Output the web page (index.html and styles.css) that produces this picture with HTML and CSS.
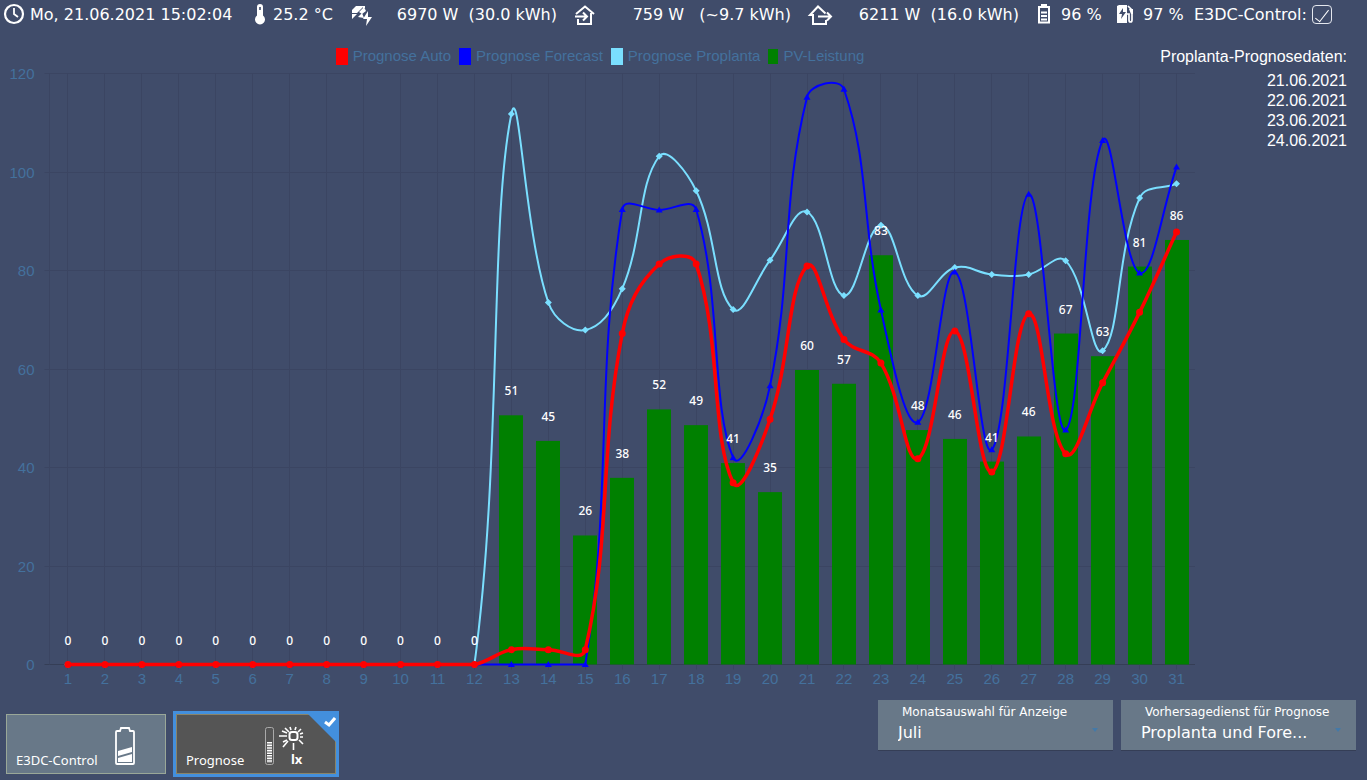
FILE: index.html
```html
<!DOCTYPE html>
<html lang="de">
<head>
<meta charset="utf-8">
<title>E3DC-Control Prognose</title>
<link rel="stylesheet" href="styles.css">
</head>
<body>
<header class="status">
  <div class="status-item">
    <svg class="icon" width="22" height="22" viewBox="0 0 22 22"><circle cx="11" cy="11" r="9" fill="none" stroke="#fff" stroke-width="2.2"/><path d="M11 5v6l4 3" fill="none" stroke="#fff" stroke-width="1.8"/></svg>
    <span class="after-clock">Mo, 21.06.2021 15:02:04</span>
  </div>
  <div class="status-item">
    <svg class="icon" width="18" height="22" viewBox="0 0 18 22"><path d="M6 4a3 3 0 0 1 6 0v8.500a5 5 0 1 1-6 0z" fill="#fff"/><path d="M9 4v3" stroke="#404c6a" stroke-width="1.600"/></svg>
    <span class="after-thermometer">25.2 °C</span>
  </div>
  <div class="status-item power">
    <svg class="icon" width="24" height="24" viewBox="0 0 24 24"><path d="M3 8L7 4h8l-7 7H3zM3 12h5l-5 5zM10 10l5-5 2 4-4 3z" fill="#fff"/><path d="M9 15l4-4 2 5zM14 4h2v2h-2z" fill="#fff"/><path d="M19 9l-5 8h4l-1 7 6-9h-4z" fill="#fff"/></svg>
    <span>6970 W&nbsp; (30.0 kWh)</span>
  </div>
  <div class="status-item power">
    <svg class="icon" width="24" height="24" viewBox="0 0 24 24"><path d="M3 12l9-7.500 9 7.500M5 17v5h13V11M2 14.500h11M10 10.500l4 4-4 4" fill="none" stroke="#fff" stroke-width="2"/></svg>
    <span>759 W&nbsp;&nbsp; (~9.7 kWh)</span>
  </div>
  <div class="status-item power">
    <svg class="icon" width="26" height="24" viewBox="0 0 26 24"><path d="M18.500 11.500L11 4.500 3 13h3v9h13v-4M11 14.500h13M20 10.500l4 4-4 4" fill="none" stroke="#fff" stroke-width="2"/></svg>
    <span>6211 W&nbsp; (16.0 kWh)</span>
  </div>
  <div class="status-item">
    <svg class="icon" width="18" height="22" viewBox="0 0 18 22"><path d="M4 4h10v15.500H4z" fill="none" stroke="#fff" stroke-width="2"/><path d="M6 2h6M6 9.500h6M6 13h6M6 16.500h6" stroke="#fff" stroke-width="2"/></svg>
    <span class="after-battery">96 %</span>
  </div>
  <div class="status-item">
    <svg class="icon" width="20" height="22" viewBox="0 0 20 22"><path d="M2 3l2-1h8v18H2z" fill="#fff"/><path d="M8 5l-4 6h3l-1 5 5-7H8z" fill="#404c6a"/><path d="M12 11h2v6q0 2 1.500 2T17 17V7l-4-4" fill="none" stroke="#fff" stroke-width="1.700"/><path d="M14 6h4v5h-2z" fill="#fff"/></svg>
    <span class="after-charger">97 %</span>
  </div>
  <div class="status-item">
    <label for="control">E3DC-Control:</label><input class="control-check" type="checkbox" id="control" checked>
  </div>
</header>

<main class="content">
  <section class="chart">
    <ul class="legend">
      <li><i class="swatch auto"></i>Prognose Auto</li>
      <li><i class="swatch forecast"></i>Prognose Forecast</li>
      <li><i class="swatch proplanta"></i>Prognose Proplanta</li>
      <li><i class="swatch pv"></i>PV-Leistung</li>
    </ul>
    <div class="plot"><svg id="plot" role="img" aria-label="Prognose und PV-Leistung"></svg></div>
  </section>
  <aside class="dates">
    <h2>Proplanta-Prognosedaten:</h2>
    <p>21.06.2021</p>
    <p>22.06.2021</p>
    <p>23.06.2021</p>
    <p>24.06.2021</p>
  </aside>
</main>

<footer class="controls">
  <nav class="tiles">
    <button class="tile" type="button">
      <span>E3DC-Control</span>
      <svg class="tile-battery" width="22" height="40" viewBox="0 0 22 40"><path d="M2 6q0-1 1-1h3l1-3h8l1 3h3q1 0 1 1v31q0 1-1 1H3q-1 0-1-1z" fill="none" stroke="#fff" stroke-width="1.800"/><path d="M4 25l14-4v5L4 30zM4 32l14-4v8H4z" fill="#fff"/></svg>
    </button>
    <button class="tile selected" type="button">
      <span>Prognose</span>
      <svg class="tile-lux" width="42" height="40" viewBox="0 0 42 40">
        <rect x="1.500" y="1.500" width="8" height="37" rx="2" fill="none" stroke="#aaa"/>
        <path d="M5.500 16v21" stroke="#fff" stroke-width="5" stroke-dasharray="1.600 1"/>
        <rect x="25.500" y="6" width="8" height="8" rx="2.500" fill="none" stroke="#fff" stroke-width="2"/>
        <path d="M15 10h8M29.500 17v7M24 15l-5 6M19 16l4-2M18 5l5 2M21 2l4 4M26 1l1 3M32 1l-1 3M37 3l-3 3M39 7l-3 1M36 11h3M35 14l4 4" stroke="#fff" stroke-width="1.600"/>
        <text x="27" y="38" class="lux-unit">lx</text>
      </svg>
      <svg class="corner" width="28" height="28" viewBox="0 0 28 28"><path d="M0 0h28v28z" fill="#438fdd"/><path d="M17 8l4 3 6-7" fill="none" stroke="#fff" stroke-width="3"/></svg>
    </button>
  </nav>
  <div class="selects">
    <div class="field">
      <label for="month">Monatsauswahl für Anzeige</label>
      <select id="month"><option>Juli</option></select>
    </div>
    <div class="field">
      <label for="service">Vorhersagedienst für Prognose</label>
      <select id="service"><option>Proplanta und Fore...</option></select>
    </div>
  </div>
</footer>
<script src="chart.js"></script>
</body>
</html>
```
FILE: styles.css
```css
* {
  box-sizing: border-box;
}

body {
  margin: 0;
  min-height: 100vh;
  display: flex;
  flex-direction: column;
  background: #404c6a;
  color: #fff;
  font-family: "DejaVu Sans", Verdana, sans-serif;
}

.status {
  display: grid;
  grid-template-columns: 248fr 98fr 224fr 234fr 228fr 80fr 79fr 173fr;
  height: 28px;
  padding-left: 3px;
  font-size: 16px;
  line-height: 26px;
  white-space: pre;
}

.status-item {
  display: flex;
  align-items: center;
}

.status-item span,
.status-item label {
  padding-top: 2px;
}

.icon {
  flex: none;
}

.after-clock {
  margin-left: 5px;
}

.after-thermometer {
  margin-left: 4px;
}

.after-battery,
.after-charger {
  margin-left: 8px;
}

.power {
  justify-content: space-between;
  padding-right: 16px;
}

.control-check {
  appearance: none;
  width: 20px;
  height: 19px;
  margin: 0 0 0 5px;
  border: 1px solid #e4e7ee;
  border-radius: 4px;
  display: grid;
  place-items: center;
}

.control-check:checked::before {
  content: "";
  width: 5px;
  height: 14px;
  border: solid #fff;
  border-width: 0 1px 1px 0;
  transform: rotate(38deg);
}

.content {
  flex: 1;
  display: flex;
}

.chart {
  flex: 1;
  min-width: 0;
  display: flex;
  flex-direction: column;
}

.legend {
  display: flex;
  justify-content: center;
  gap: 8px;
  margin: 0;
  padding: 18px 0 0;
  list-style: none;
  color: #44719d;
  font: 15px/20px "Liberation Sans", Arial, sans-serif;
}

.legend li {
  display: flex;
  align-items: center;
  gap: 5px;
}

.swatch {
  width: 12px;
  height: 17px;
}

.auto {
  background: #f00;
}

.forecast {
  background: #00f;
}

.proplanta {
  background: #7adfff;
}

.pv {
  width: 10px;
  height: 15px;
  background: #008000;
}

.plot {
  flex: 1;
  position: relative;
  min-height: 200px;
}

.plot svg {
  position: absolute;
  inset: 0;
  width: 100%;
  height: 100%;
}

.grid {
  stroke: #3b4562;
}

.axis {
  stroke: #353e56;
}

.tick {
  fill: #44719d;
  font: 15px "Liberation Sans", Arial, sans-serif;
}

.value {
  fill: #fff;
  font: 500 12px "Noto Sans", sans-serif;
  text-anchor: middle;
}

.centered {
  text-anchor: middle;
}

.right {
  text-anchor: end;
}

.dates {
  width: 167px;
  padding: 19px 20px 0 0;
  display: flex;
  flex-direction: column;
  align-items: flex-end;
  font: 16px/20px "Liberation Sans", Arial, sans-serif;
  white-space: nowrap;
}

.dates h2 {
  margin: 0 0 4px;
  font: inherit;
}

.dates p {
  margin: 0;
}

.controls {
  display: flex;
  justify-content: space-between;
  align-items: flex-start;
  height: 88px;
  padding: 8px 11px 0 6px;
}

.tiles {
  display: flex;
  gap: 10px;
  padding-top: 14px;
}

.tile {
  position: relative;
  display: flex;
  align-items: flex-end;
  width: 160px;
  height: 60px;
  padding: 0 9px 7px;
  border: 1px solid #9aa798;
  background: #687888;
  color: #fff;
  font: 13px/11px "Noto Sans", sans-serif;
}

.selected {
  border-color: #8a8468;
  background: #555;
  outline: 3px solid #438fdd;
}

.tile-battery {
  margin-left: 16px;
}

.tile-lux {
  margin-left: 20px;
  overflow: visible;
}

.lux-unit {
  fill: #fff;
  font: bold 13px "Noto Sans", sans-serif;
}

.corner {
  position: absolute;
  top: -1px;
  right: -1px;
}

.selects {
  display: flex;
  gap: 8px;
}

.field {
  position: relative;
  width: 235px;
  height: 51px;
  padding-top: 4px;
  border-bottom: 1px solid #353e56;
  background: #687888;
}

.field::after {
  content: "";
  position: absolute;
  top: 28px;
  right: 15px;
  border: solid transparent;
  border-width: 4px 3px 0;
  border-top-color: #4479a8;
}

.field label {
  display: block;
  padding-left: 24px;
  font-size: 12px;
  line-height: 17px;
  white-space: nowrap;
}

.field select {
  appearance: none;
  width: 100%;
  height: 24px;
  padding: 0 20px;
  border: 0;
  background: none;
  color: #fff;
  font: 16px/24px "DejaVu Sans", Verdana, sans-serif;
}
```
FILE: chart.js
```js
const none = Array(12).fill(0);
const auto = none.concat([3, 3, 3, 67.2, 81.3, 81.3, 36.9, 49.8, 80.9, 66, 61.2, 41.8, 67.7, 39.1, 71.2, 42.8, 57.2, 71.5, 87.8]);
const forecast = none.concat([0, 0, 0, 92.4, 92.3, 92.4, 42, 56.6, 115.2, 116.8, 72, 49.2, 79.7, 43.6, 95.5, 47.6, 106.4, 79.5, 101]);
const proplanta = none.concat([111.8, 73.5, 67.9, 76.3, 103.2, 96.2, 72.1, 82.1, 91.9, 74.9, 89.2, 74.9, 80.6, 79.2, 79.2, 82, 63.7, 94.7, 97.6]);
const pv = none.concat([50.6, 45.4, 26.2, 37.9, 51.8, 48.6, 40.9, 35, 59.8, 57, 83.1, 47.6, 45.8, 41.2, 46.3, 67.2, 62.6, 80.8, 86.2]);

const svg = document.getElementById('plot');

function add(name, attrs, text) {
  const el = document.createElementNS('http://www.w3.org/2000/svg', name);
  for (const key in attrs) el.setAttribute(key, attrs[key]);
  if (text !== undefined) el.textContent = text;
  svg.appendChild(el);
}

function draw() {
  const box = svg.parentElement.getBoundingClientRect();
  const left = 49.5, right = box.width - 5, top = 7.5, bottom = box.height - 27.5;
  const step = (right - left) / 31;
  const px = i => left + step * (i + 0.5);
  const py = v => bottom - (bottom - top) * v / 120;
  const crisp = n => Math.floor(n) + 0.5;
  const clamp = y => Math.max(top, Math.min(bottom, y));

  svg.replaceChildren();
  for (let v = 0; v <= 120; v += 20) {
    const y = crisp(py(v));
    add('line', {class: v ? 'grid' : 'axis', x1: left - 5, x2: right, y1: y, y2: y});
    add('text', {class: 'tick right', x: left - 15, y: y + 5}, v);
  }
  add('line', {class: 'grid', x1: left, x2: left, y1: top, y2: bottom});
  pv.forEach((v, i) => {
    const x = crisp(px(i));
    add('line', {class: 'grid', x1: x, x2: x, y1: top, y2: bottom + 5});
    add('text', {class: 'tick centered', x: px(i), y: bottom + 19}, i + 1);
    if (v) add('rect', {x: Math.round(px(i) - step * 0.325), y: py(v), width: Math.round(step * 0.65), height: bottom - py(v), fill: '#008000'});
  });

  curve(proplanta, '#7adfff', 2, (x, y) => `M${x} ${y - 3.5}l3.5 3.5l-3.5 3.5l-3.5-3.5z`);
  curve(forecast, '#00f', 2, (x, y) => `M${x} ${y - 3.5}l3.5 6h-7z`);
  curve(auto, '#f00', 3.5, (x, y) => `M${x - 3.5} ${y}a3.5 3.5 0 1 0 7 0a3.5 3.5 0 1 0-7 0`);

  pv.forEach((v, i) => add('text', {class: 'value', x: px(i), y: py(v) - 20}, Math.round(v)));

  // Smooth line with 0.4 tension; control points stay inside the plot area.
  function curve(data, color, width, marker) {
    const pts = data.map((v, i) => [px(i), py(v)]);
    const ctl = pts.map((p, i) => {
      const a = pts[Math.max(i - 1, 0)], b = pts[Math.min(i + 1, pts.length - 1)];
      const da = Math.hypot(p[0] - a[0], p[1] - a[1]), db = Math.hypot(b[0] - p[0], b[1] - p[1]);
      const fa = 0.4 * da / (da + db), fb = 0.4 * db / (da + db);
      const dx = b[0] - a[0], dy = b[1] - a[1];
      return [p[0] - fa * dx, clamp(p[1] - fa * dy), p[0] + fb * dx, clamp(p[1] + fb * dy)];
    });
    let d = `M${pts[0]}`;
    for (let i = 1; i < pts.length; i++) {
      d += `C${ctl[i - 1][2]} ${ctl[i - 1][3]} ${ctl[i][0]} ${ctl[i][1]} ${pts[i]}`;
    }
    add('path', {d, fill: 'none', stroke: color, 'stroke-width': width});
    add('path', {d: pts.map(p => marker(p[0], p[1])).join(''), fill: color});
  }
}

draw();
addEventListener('resize', draw);
```
